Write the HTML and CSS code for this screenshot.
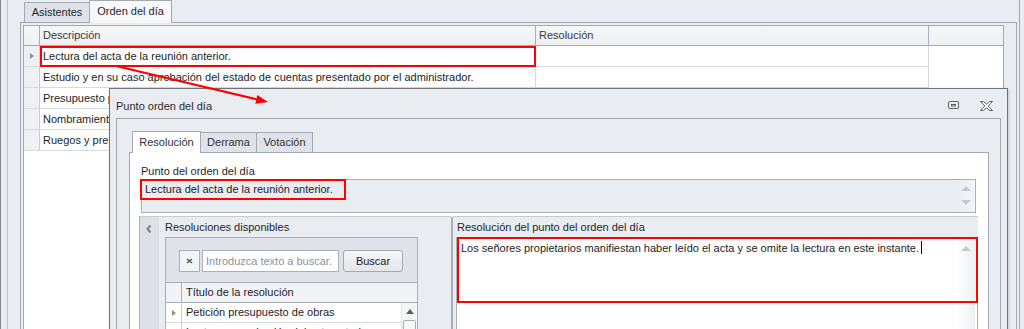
FILE: index.html
```html
<!DOCTYPE html>
<html lang="es">
<head>
<meta charset="UTF-8">
<title>Orden del día</title>
<link rel="stylesheet" href="styles.css">
</head>
<body>
<div class="app">
    <div class="group">
        <div class="tabs">
            <div class="tab">Asistentes</div>
            <div class="tab active">Orden del día</div>
        </div>
        <div class="page">
            <div class="grid">
                <div class="row head">
                    <div class="ind"></div>
                    <div class="cell desc">Descripción</div>
                    <div class="cell res">Resolución</div>
                    <div class="cell rest"></div>
                </div>
                <div class="row">
                    <div class="ind"><span class="tri"></span></div>
                    <div class="cell desc marked">Lectura del acta de la reunión anterior.</div>
                    <div class="cell res"></div>
                </div>
                <div class="row">
                    <div class="ind"></div>
                    <div class="cell desc">Estudio y en su caso aprobación del estado de cuentas presentado por el administrador.</div>
                    <div class="cell res"></div>
                </div>
                <div class="row">
                    <div class="ind"></div>
                    <div class="cell desc">Presupuesto para el próximo ejercicio.</div>
                    <div class="cell res"></div>
                </div>
                <div class="row">
                    <div class="ind"></div>
                    <div class="cell desc">Nombramiento de cargos.</div>
                    <div class="cell res"></div>
                </div>
                <div class="row">
                    <div class="ind"></div>
                    <div class="cell desc">Ruegos y preguntas.</div>
                    <div class="cell res"></div>
                </div>
            </div>
        </div>
    </div>

    <!-- ventana modal -->
    <div class="dialog">
        <div class="titlebar">
            <span class="title">Punto orden del día</span>
            <svg class="tb-btn" width="12" height="9" viewBox="0 0 12 9">
                <rect x="0.5" y="0.5" width="10" height="7" rx="1.5" fill="none" stroke="#5b6168"/>
                <rect x="3.5" y="3.5" width="4" height="1.5" fill="none" stroke="#5b6168"/>
            </svg>
            <svg class="tb-btn close" width="13" height="10" viewBox="0 0 13 10">
                <polygon points="0.5,0.5 3.5,0.5 6.5,3.2 9.5,0.5 12.5,0.5 8.2,5 12.5,9.5 9.5,9.5 6.5,6.8 3.5,9.5 0.5,9.5 4.8,5" fill="#fff" stroke="#5b6168"/>
            </svg>
        </div>
        <div class="inner">
            <div class="dtabs">
                <div class="dtab active">Resolución</div>
                <div class="dtab">Derrama</div>
                <div class="dtab">Votación</div>
            </div>
            <div class="dpage">
                <div class="label">Punto del orden del día</div>
                <div class="memo ro">
                    <span class="memo-text">Lectura del acta de la reunión anterior.</span>
                    <span class="mark mark-point"></span>
                    <div class="vscroll">
                        <span class="arr up"></span>
                        <span class="arr down"></span>
                    </div>
                </div>
                <div class="split">
                    <div class="left">
                        <div class="strip">
                            <svg width="6" height="8" viewBox="0 0 6 8"><polyline points="4.5,0.5 1.5,4 4.5,7.5" fill="none" stroke="#7b8088" stroke-width="2"/></svg>
                        </div>
                        <div class="left-body">
                            <div class="label">Resoluciones disponibles</div>
                            <div class="lgrid">
                                <div class="search">
                                    <div class="clear">
                                        <svg width="7" height="6" viewBox="0 0 7 6"><path d="M1 1L6 5M6 1L1 5" stroke="#555b62" stroke-width="1.6"/></svg>
                                    </div>
                                    <div class="input">Introduzca texto a buscar.</div>
                                    <div class="btn">Buscar</div>
                                </div>
                                <div class="lrow lhead">
                                    <div class="ind"></div>
                                    <div class="cell">Título de la resolución</div>
                                </div>
                                <div class="lbody">
                                    <div class="lrows">
                                        <div class="lrow">
                                            <div class="ind"><span class="tri"></span></div>
                                            <div class="cell">Petición presupuesto de obras</div>
                                        </div>
                                        <div class="lrow">
                                            <div class="ind"></div>
                                            <div class="cell">Lectura y aprobación del acta anterior</div>
                                        </div>
                                    </div>
                                    <div class="sbar">
                                        <span class="arr up dark"></span>
                                        <span class="thumb"></span>
                                    </div>
                                </div>
                            </div>
                        </div>
                    </div>
                    <div class="splitter"></div>
                    <div class="right">
                        <div class="label">Resolución del punto del orden del día</div>
                        <div class="memo rt">
                            <span class="memo-text">Los señores propietarios manifiestan haber leído el acta y se omite la lectura en este instante.<span class="caret"></span></span>
                            <span class="mark mark-res"></span>
                            <div class="vscroll">
                                <span class="arr up"></span>
                            </div>
                        </div>
                    </div>
                </div>
            </div>
        </div>
    </div>

    <svg class="arrow" width="1024" height="329" viewBox="0 0 1024 329">
        <line x1="116" y1="66" x2="258" y2="99.6" stroke="#f00" stroke-width="2"/>
        <polygon points="268,102 257.3,94.9 255.3,103.7" fill="#f00"/>
    </svg>
</div>
</body>
</html>
```

FILE: styles.css
```css
* {
    box-sizing: border-box;
}

body {
    margin: 0;
    font-family: "Liberation Sans", Arial, sans-serif;
    font-size: 11px;
    color: #1d1d1d;
    background: #e9ecf1;
    overflow: hidden;
}

.app {
    position: relative;
    width: 1024px;
    height: 329px;
    border-left: 1px solid #80868e;
    overflow: hidden;
}

.group {
    margin-left: 6px;
    width: 1013px;
    height: 100%;
    border-left: 1px solid #bcc1c8;
    border-right: 1px solid #9fa5ad;
    padding: 0 2px 0 12px;
}

/* pestañas principales */
.tabs {
    display: flex;
    align-items: flex-end;
    height: 22px;
    padding-left: 4px;
}

.tab {
    height: 20px;
    width: 66px;
    line-height: 19px;
    text-align: center;
    white-space: nowrap;
    background: #dfe2e8;
    border: 1px solid #a3a9b1;
    border-bottom: none;
    color: #262626;
}

.tab.active {
    width: 83px;
    height: 23px;
    margin-left: -1px;
    margin-bottom: -1px;
    line-height: 21px;
    background: #f7f8fa;
    position: relative;
    z-index: 1;
}

.page {
    height: 400px;
    border: 1px solid #a3a9b1;
    padding: 2px 0 0 2px;
}

.grid {
    width: 981px;
    height: 400px;
    background: #fff;
    border: 1px solid #a3a9b1;
}

.row {
    display: flex;
    height: 21px;
}

.row .ind {
    width: 16px;
    background: #eef0f3;
    border-right: 1px solid #c9cdd3;
    border-bottom: 1px solid #d7dadf;
    display: flex;
    align-items: center;
    justify-content: center;
}

.cell {
    padding-left: 3px;
    line-height: 20px;
    white-space: nowrap;
    overflow: hidden;
}

.row .cell {
    border-right: 1px solid #d7dadf;
    border-bottom: 1px solid #d7dadf;
}

.desc {
    width: 496px;
}

.res {
    width: 393px;
}

.row.head {
    height: 20px;
    background: linear-gradient(#f5f6f8, #edeff2);
}

.row.head .ind,
.row.head .cell {
    background: transparent;
    border-right: 1px solid #a9afb7;
    border-bottom: 1px solid #a3a9b1;
    color: #3a3a3a;
    line-height: 19px;
}

.row.head .rest {
    flex: 1;
    border-right: none;
}

.marked {
    outline: 2px solid #f00;
    outline-offset: -2px;
}

.tri {
    width: 0;
    height: 0;
    border-left: 4px solid #8c9199;
    border-top: 3.5px solid transparent;
    border-bottom: 3.5px solid transparent;
}

/* ventana de dialogo */
.dialog {
    position: absolute;
    left: 108px;
    top: 88px;
    width: 899px;
    height: 260px;
    background: #e9ecf1;
    border: 1px solid #6c727a;
    box-shadow: 1px 1px 3px rgba(0, 0, 0, 0.15);
    z-index: 2;
}

.titlebar {
    display: flex;
    align-items: center;
    height: 29px;
    padding: 4px 14px 0 6px;
}

.title {
    flex: 1;
    color: #2a2a2a;
}

.tb-btn {
    display: block;
    margin-right: 20px;
}

.tb-btn.close {
    margin-right: 0;
}

.inner {
    margin: 0 6px;
    height: 240px;
    border: 1px solid #a3a9b1;
    padding: 12px 11px 0 12px;
}

.dtabs {
    display: flex;
    align-items: flex-end;
    height: 21px;
    padding-left: 3px;
}

.dtab {
    width: 57px;
    height: 20px;
    line-height: 19px;
    text-align: center;
    white-space: nowrap;
    background: #dfe2e8;
    border: 1px solid #a3a9b1;
    border-bottom: none;
    margin-left: -1px;
    color: #333;
}

.dtab.active {
    width: 69px;
    height: 22px;
    line-height: 21px;
    margin-bottom: -1px;
    background: #fff;
    position: relative;
    z-index: 1;
    margin-left: 0;
}

.dpage {
    height: 200px;
    background: #fff;
    border: 1px solid #a3a9b1;
    padding: 11px 12px 0 11px;
}

.label {
    height: 15px;
    line-height: 14px;
    color: #262626;
    white-space: nowrap;
}

.memo {
    position: relative;
    border: 1px solid #aab0b7;
    padding: 1px 3px;
    line-height: 16px;
}

.memo.ro {
    height: 34px;
    background: #e9ecf1;
}

.memo-text {
    position: relative;
}

.mark {
    position: absolute;
    border: 2px solid #f00;
    z-index: 1;
}

.mark-point {
    left: -2px;
    top: -1px;
    width: 206px;
    height: 21px;
}

.mark-res {
    left: 0;
    top: -1px;
    right: -1px;
    height: 66px;
}

.vscroll {
    position: absolute;
    right: 0;
    top: 0;
    bottom: 0;
    width: 19px;
    background: linear-gradient(to right, #e9ecf1, #f3f5f8);
    display: flex;
    flex-direction: column;
    align-items: center;
    padding-top: 6px;
    gap: 9px;
}

.memo.rt .vscroll {
    background: linear-gradient(to right, #ffffff, #eef0f3);
    right: 2px;
    padding-top: 8px;
}

.arr {
    width: 0;
    height: 0;
    border-left: 5px solid transparent;
    border-right: 5px solid transparent;
}

.arr.up {
    border-bottom: 5px solid #c5c9cf;
}

.arr.down {
    border-top: 5px solid #c5c9cf;
}

.arr.up.dark {
    border-bottom-color: #595e65;
}

.caret {
    display: inline-block;
    width: 1px;
    height: 13px;
    background: #000;
    margin-left: 2px;
    vertical-align: -2px;
}

/* paneles inferiores */
.split {
    display: flex;
    margin: 3px -2px 0 -2px;
    height: 120px;
}

.left {
    display: flex;
    width: 312px;
    border-left: 1px solid #aab0b7;
    border-top: 1px solid #c7ccd2;
}

.strip {
    width: 19px;
    background: #dde1e7;
    padding: 8px 0 0 6px;
}

.strip svg {
    display: block;
}

.left-body {
    flex: 1;
    background: #e9ecf1;
    padding: 2px 0 0 6px;
}

.left-body .label {
    height: 18px;
    line-height: 17px;
}

.lgrid {
    width: 253px;
    height: 120px;
    border: 1px solid #aab0b7;
    background: #fff;
}

.search {
    display: flex;
    height: 44px;
    background: #dfe3e9;
    padding: 12px 0 0 13px;
}

.clear {
    width: 21px;
    height: 22px;
    border: 1px solid #aab0b7;
    background: #f3f4f6;
    display: flex;
    align-items: center;
    justify-content: center;
}

.input {
    width: 137px;
    height: 22px;
    margin-left: 2px;
    border: 1px solid #aab0b7;
    background: #fff;
    color: #8d9299;
    padding-left: 3px;
    line-height: 20px;
    white-space: nowrap;
    overflow: hidden;
}

.btn {
    width: 60px;
    height: 22px;
    margin-left: 4px;
    border: 1px solid #a3a9b1;
    border-radius: 3px;
    background: linear-gradient(#f6f7f9, #e3e6eb);
    text-align: center;
    line-height: 20px;
    color: #222;
}

.lrow {
    display: flex;
    height: 20px;
}

.lrow .ind {
    width: 16px;
    border-right: 1px solid #c9cdd3;
    border-bottom: 1px solid #d7dadf;
    display: flex;
    align-items: center;
    justify-content: center;
}

.lrow .cell {
    flex: 1;
    padding-left: 4px;
    line-height: 19px;
}

.lhead {
    height: 21px;
    background: #f2f3f6;
    border-top: 1px solid #aab0b7;
    border-bottom: 1px solid #aab0b7;
}

.lhead .ind {
    border-right: 1px solid #aab0b7;
    border-bottom: none;
}

.lbody {
    display: flex;
}

.lrows {
    flex: 1;
}

.lrows .lrow .cell {
    border-bottom: 1px solid #d7dadf;
}

.sbar {
    width: 16px;
    background: #f4f5f7;
    border-left: 1px solid #e2e5e9;
    display: flex;
    flex-direction: column;
    align-items: center;
    padding-top: 6px;
}

.sbar .arr {
    border-left-width: 4px;
    border-right-width: 4px;
}

.thumb {
    width: 13px;
    height: 40px;
    margin-top: 6px;
    border: 1px solid #a9aeb5;
    border-radius: 2px;
    background: #f7f8fa;
}

.splitter {
    width: 2px;
    background: #a9aeb5;
    margin-top: 1px;
}

.right {
    flex: 1;
    background: #e9ecf1;
    border-top: 1px solid #c7ccd2;
    padding: 2px 0 0 3px;
}

.right .label {
    padding-left: 1px;
    height: 18px;
    line-height: 17px;
}

.memo.rt {
    height: 120px;
    background: #fff;
    padding: 2px 4px;
}

.arrow {
    position: absolute;
    left: -1px;
    top: 0;
    z-index: 5;
    pointer-events: none;
}
```
